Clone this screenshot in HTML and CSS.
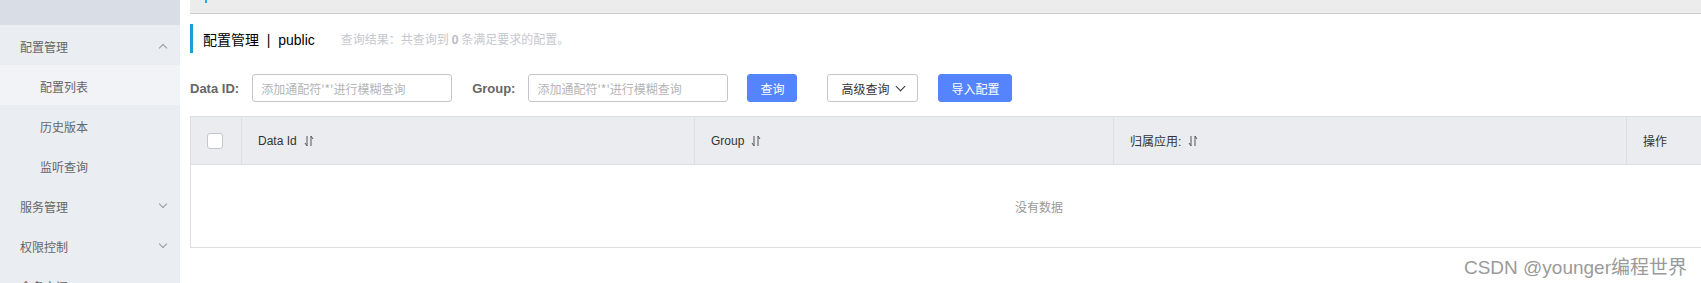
FILE: index.html
```html
<!DOCTYPE html>
<html>
  <head>
    <meta charset="utf-8">
    <title>配置管理</title>
    <link rel="stylesheet" href="styles.css">
  </head>
  <body>
    <div class="layout">
      <aside class="sidebar">
        <div class="sidebar__top"></div>
        <div class="nav-item">配置管理 <span class="chevron chevron--up"></span></div>
        <div class="nav-item nav-item--sub is-active">配置列表</div>
        <div class="nav-item nav-item--sub">历史版本</div>
        <div class="nav-item nav-item--sub">监听查询</div>
        <div class="nav-item">服务管理 <span class="chevron"></span></div>
        <div class="nav-item">权限控制 <span class="chevron"></span></div>
        <div class="nav-item">命名空间</div>
      </aside>

      <main class="main">
        <div class="topbar"><span class="topbar__mark"></span></div>

        <div class="title">
          <span class="title__name">配置管理 &nbsp;|&nbsp; public</span>
          <span class="title__summary">查询结果：共查询到 <strong>0</strong> 条满足要求的配置。</span>
        </div>

        <div class="search">
          <label class="search__label">Data ID:</label>
          <input class="search__input" type="text" placeholder="添加通配符'*'进行模糊查询">
          <label class="search__label search__label--group">Group:</label>
          <input class="search__input" type="text" placeholder="添加通配符'*'进行模糊查询">
          <button class="btn btn--primary btn--query">查询</button>
          <button class="btn btn--normal">高级查询 <span class="btn__arrow"></span></button>
          <button class="btn btn--primary btn--import">导入配置</button>
        </div>

        <div class="table">
          <div class="table__head">
            <div class="table__cell table__cell--check"><span class="checkbox"></span></div>
            <div class="table__cell">Data Id <svg class="sort" width="10" height="12" viewBox="0 0 10 12"><path d="M3 1v10L1 8M7 11V1l2 3" fill="none" stroke="currentColor" stroke-width="1"/></svg></div>
            <div class="table__cell">Group <svg class="sort" width="10" height="12" viewBox="0 0 10 12"><path d="M3 1v10L1 8M7 11V1l2 3" fill="none" stroke="currentColor" stroke-width="1"/></svg></div>
            <div class="table__cell">归属应用: <svg class="sort" width="10" height="12" viewBox="0 0 10 12"><path d="M3 1v10L1 8M7 11V1l2 3" fill="none" stroke="currentColor" stroke-width="1"/></svg></div>
            <div class="table__cell">操作</div>
          </div>
          <div class="table__empty">没有数据</div>
        </div>
      </main>
    </div>

    <div class="watermark">CSDN @younger编程世界</div>
  </body>
</html>
```

FILE: styles.css
```css
/* Base */
* {
  box-sizing: border-box;
}

html,
body {
  height: 100%;
}

body {
  background: #fff;
  color: #333;
  font-family: "Liberation Sans", Roboto, "Noto Sans CJK SC", sans-serif;
  font-size: 12px;
  margin: 0;
  overflow: hidden;
  position: relative;
}

/* Layout */
.layout {
  display: flex;
  height: 283px;
}

/* Sidebar */
.sidebar {
  background: #eaedf1;
  flex-shrink: 0;
  width: 180px;
}

.sidebar__top {
  background: #d9dde5;
  height: 25px;
}

.nav-item {
  align-items: center;
  color: #666;
  display: flex;
  font-family: "Noto Sans CJK SC", sans-serif;
  font-size: 12px;
  height: 40px;
  justify-content: space-between;
  padding: 3px 14px 0 20px;
}

.nav-item--sub {
  padding-left: 40px;
}

.nav-item.is-active {
  background: #f2f3f7;
}

.chevron {
  border-bottom: 1px solid #999;
  border-right: 1px solid #999;
  height: 6px;
  margin-top: -6px;
  transform: rotate(45deg);
  width: 6px;
}

.chevron--up {
  margin-top: 2px;
  transform: rotate(-135deg);
}

/* Main */
.main {
  flex: 1;
  min-width: 0;
  padding-left: 10px;
}

.topbar {
  background: #ececec;
  border-bottom: 1px solid #ccc;
  height: 14px;
  position: relative;
}

.topbar__mark {
  background: #2aa8e0;
  height: 3px;
  left: 15px;
  position: absolute;
  top: 0;
  width: 2px;
}

.title {
  align-items: center;
  border-left: 3px solid #1a9fd6;
  display: flex;
  height: 29px;
  margin-top: 10px;
  padding-left: 10px;
}

.title__name {
  color: #000;
  font-family: "Liberation Sans", "Noto Sans CJK SC", sans-serif;
  font-size: 14px;
}

.title__summary {
  color: #c5c8ce;
  font-family: "Noto Sans CJK SC", sans-serif;
  margin-left: 26px;
}

.title__summary strong {
  color: #b8bbc2;
}

/* Search */
.search {
  align-items: center;
  display: flex;
  margin-top: 21px;
}

.search__label {
  color: #666;
  font-size: 13px;
  font-weight: bold;
  margin-right: 13px;
}

.search__label--group {
  margin-left: 20px;
}

.search__input {
  border: 1px solid #c4c6cf;
  border-radius: 3px;
  color: #333;
  font-family: "Noto Sans CJK SC", sans-serif;
  font-size: 12px;
  height: 28px;
  padding: 0 8px;
  width: 200px;
}

.search__input::placeholder {
  color: #b5b5b5;
}

.btn {
  align-items: center;
  border-radius: 3px;
  display: inline-flex;
  font-family: "Noto Sans CJK SC", sans-serif;
  font-size: 12px;
  height: 28px;
  justify-content: center;
  padding: 0;
}

.btn--primary {
  background: #5584ff;
  border: 1px solid #5584ff;
  color: #fff;
}

.btn--query {
  margin: 0 30px 0 19px;
  width: 50px;
}

.btn--normal {
  background: #fff;
  border: 1px solid #c4c6cf;
  color: #333;
  width: 91px;
}

.btn__arrow {
  border-bottom: 1px solid #333;
  border-right: 1px solid #333;
  height: 7px;
  margin: -4px 0 0 8px;
  transform: rotate(45deg);
  width: 7px;
}

.btn--import {
  margin-left: 20px;
  width: 74px;
}

/* Table */
.table {
  border: 1px solid #dcdee3;
  margin-top: 14px;
  width: 1698px;
}

.table__head {
  background: #ebecf0;
  border-bottom: 1px solid #dcdee3;
  display: grid;
  grid-template-columns: 50px 453px 419px 513px 1fr;
  height: 48px;
}

.table__cell {
  align-items: center;
  border-left: 1px solid #dcdee3;
  color: #333;
  display: flex;
  font-family: "Liberation Sans", "Noto Sans CJK SC", sans-serif;
  padding-left: 16px;
}

.table__cell--check {
  border-left: 0;
}

.checkbox {
  background: #fff;
  border: 1px solid #c4c6cf;
  border-radius: 3px;
  height: 16px;
  width: 16px;
}

.sort {
  color: #555;
  margin-left: 7px;
}

.table__empty {
  align-items: center;
  color: #999;
  display: flex;
  font-family: "Noto Sans CJK SC", sans-serif;
  height: 82px;
  justify-content: center;
}

/* Watermark */
.watermark {
  color: #9a9a9a;
  font-family: "Liberation Sans", "Noto Sans CJK SC", sans-serif;
  font-size: 19px;
  position: absolute;
  right: 14px;
  text-shadow: 0 0 2px #fff;
  top: 252px;
}
```
